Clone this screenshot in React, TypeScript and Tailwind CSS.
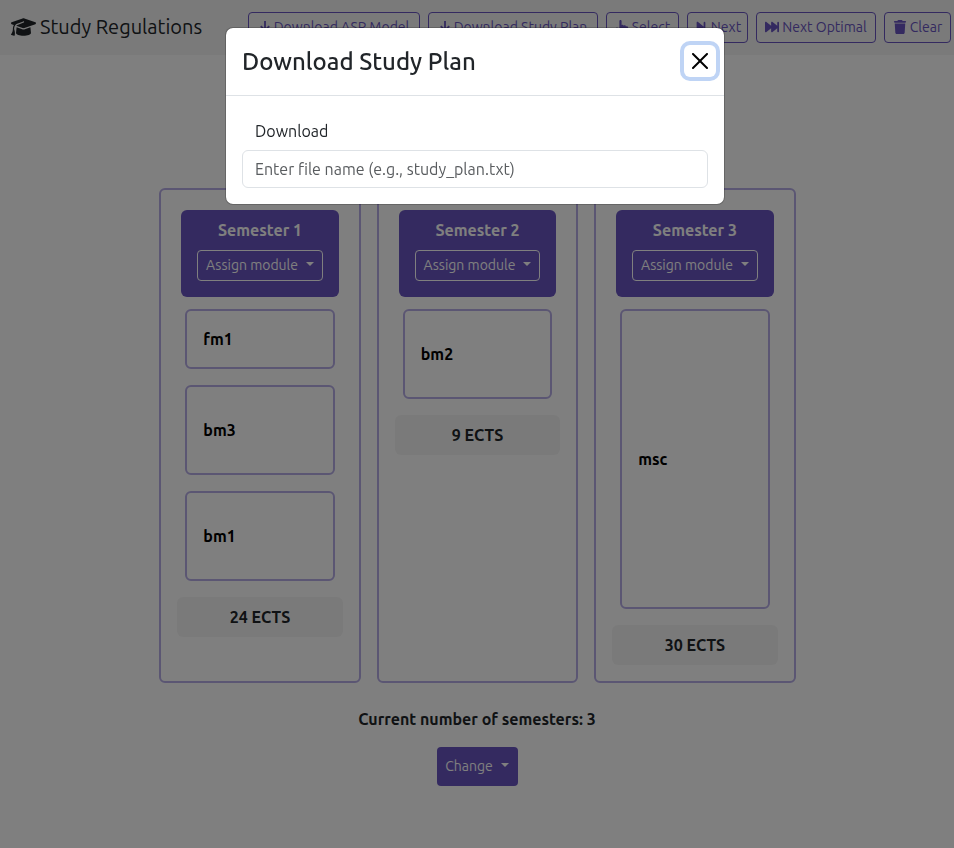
import type { ReactNode } from "react";
import {
  FaForwardFast,
  FaForwardStep,
  FaGraduationCap,
  FaHandPointer,
  FaTrash,
} from "react-icons/fa6";

type Module = { name: string; height: string };
type Semester = { title: string; modules: Module[]; ects: number };

const semesters: Semester[] = [
  {
    title: "Semester 1",
    modules: [
      { name: "fm1", height: "h-[60px]" },
      { name: "bm3", height: "h-[90px]" },
      { name: "bm1", height: "h-[90px]" },
    ],
    ects: 24,
  },
  { title: "Semester 2", modules: [{ name: "bm2", height: "h-[90px]" }], ects: 9 },
  { title: "Semester 3", modules: [{ name: "msc", height: "h-[300px]" }], ects: 30 },
];

function Caret() {
  return (
    <span
      aria-hidden="true"
      className="mb-0.5 ml-1 inline-block border-x-4 border-t-4 border-x-transparent border-t-current"
    />
  );
}

function ArrowDown() {
  return (
    <svg
      viewBox="0 0 12 14"
      className="h-3.5 w-3"
      fill="none"
      stroke="currentColor"
      strokeWidth="1.8"
      aria-hidden="true"
    >
      <path d="M6 1v9.5M1.8 6.2 6 10.4l4.2-4.2" />
    </svg>
  );
}

function NavButton({ icon, width, children }: { icon: ReactNode; width: string; children: ReactNode }) {
  return (
    <button
      type="button"
      className={`flex h-[31px] shrink-0 items-center justify-center gap-[3px] rounded border border-[#6854c0] pb-0.5 text-sm whitespace-nowrap text-[#6854c0] ${width}`}
    >
      {icon}
      {children}
    </button>
  );
}

function Navbar() {
  return (
    <nav className="flex items-center justify-between bg-[#f5f5f5] py-3 pr-[3px] pl-[11px]">
      <a href="#" className="flex items-center gap-1 pb-0.5 text-xl leading-7 whitespace-nowrap">
        <FaGraduationCap className="h-5 w-[25px]" />
        Study Regulations
      </a>
      <div className="flex gap-2">
        <NavButton icon={<ArrowDown />} width="w-[172px]">Download ASP Model</NavButton>
        <NavButton icon={<ArrowDown />} width="w-[170px]">Download Study Plan</NavButton>
        <NavButton icon={<FaHandPointer />} width="w-[73px]">Select</NavButton>
        <NavButton icon={<FaForwardStep />} width="w-[61px]">Next</NavButton>
        <NavButton icon={<FaForwardFast />} width="w-[120px]">Next Optimal</NavButton>
        <NavButton icon={<FaTrash />} width="w-[67px]">Clear</NavButton>
      </div>
    </nav>
  );
}

function SemesterColumn({ semester }: { semester: Semester }) {
  return (
    <section className="rounded-md border-2 border-[#b6ace6] p-4">
      <header className="m-1 rounded-md bg-[#6854c0] px-4 pt-2 pb-4 text-center text-white">
        <h2 className="mb-2 leading-6 font-bold">{semester.title}</h2>
        <button
          type="button"
          aria-haspopup="menu"
          className="flex h-[31px] w-full items-center justify-center gap-1 rounded border border-white pb-0.5 text-sm whitespace-nowrap"
        >
          Assign module
          <Caret />
        </button>
      </header>
      <div className="flex flex-col gap-4 px-2 pt-2 pb-4">
        {semester.modules.map((m) => (
          <div
            key={m.name}
            className={`flex items-center rounded-md border-2 border-[#b6ace6] px-4 font-bold text-black ${m.height}`}
          >
            {m.name}
          </div>
        ))}
      </div>
      <div className="rounded-md bg-[#f5f5f5] py-2 text-center leading-6 font-bold">
        {semester.ects} ECTS
      </div>
    </section>
  );
}

function DownloadDialog() {
  return (
    <div className="fixed inset-0 bg-black/50 pt-[27px] pr-1">
      <div
        role="dialog"
        aria-modal="true"
        aria-labelledby="dialog-title"
        className="mx-auto max-w-[500px] rounded-lg border border-black/20 bg-white bg-clip-padding"
      >
        <div className="flex items-start justify-between border-b border-[#dee2e6] p-4 pr-2">
          <h1 id="dialog-title" className="text-2xl leading-[35px] font-medium">
            Download Study Plan
          </h1>
          <button
            type="button"
            aria-label="Close"
            className="mt-px flex size-8 items-center justify-center rounded-md text-black shadow-[0_0_0_4px_#bfd4f5]"
          >
            <svg viewBox="0 0 16 16" className="size-4" fill="currentColor" aria-hidden="true">
              <path d="M.293.293a1 1 0 0 1 1.414 0L8 6.586 14.293.293a1 1 0 1 1 1.414 1.414L9.414 8l6.293 6.293a1 1 0 0 1-1.414 1.414L8 9.414l-6.293 6.293a1 1 0 0 1-1.414-1.414L6.586 8 .293 1.707a1 1 0 0 1 0-1.414z" />
            </svg>
          </button>
        </div>
        <form className="p-4">
          <label htmlFor="file-name" className="block px-[13px] py-[7px] leading-6">
            Download
          </label>
          <input
            id="file-name"
            type="text"
            placeholder="Enter file name (e.g., study_plan.txt)"
            className="block h-[38px] w-full rounded-md border border-[#dee2e6] px-3 placeholder:text-[#595c5f]"
          />
        </form>
      </div>
    </div>
  );
}

export default function App() {
  return (
    <div className="min-h-screen bg-white font-[Ubuntu,Roboto,sans-serif] text-[#212529]">
      <Navbar />
      <main className="pt-[133px]">
        <div className="grid grid-cols-3 gap-4 pr-[16.6%] pl-[16.7%]">
          {semesters.map((s) => (
            <SemesterColumn key={s.title} semester={s} />
          ))}
        </div>
        <div className="mt-6 flex flex-col items-center gap-4">
          <p className="leading-6 font-bold">Current number of semesters: 3</p>
          <button
            type="button"
            aria-haspopup="menu"
            className="flex h-[39px] w-[81px] items-center justify-center gap-1 rounded bg-[#6854c0] pb-0.5 text-sm text-white"
          >
            Change
            <Caret />
          </button>
        </div>
      </main>
      <DownloadDialog />
    </div>
  );
}
